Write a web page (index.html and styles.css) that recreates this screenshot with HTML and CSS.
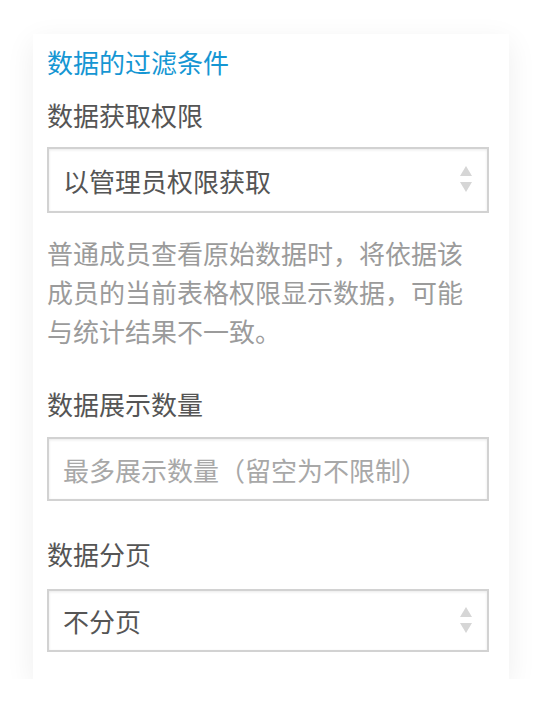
FILE: index.html
```html
<!DOCTYPE html>
<html lang="zh-CN">
<head>
<meta charset="utf-8">
<link rel="stylesheet" href="styles.css">
</head>
<body>
<div class="page">
  <div class="card">
    <div class="title">数据的过滤条件</div>
    <div class="label l1">数据获取权限</div>
    <div class="field select s1">
      <span class="value">以管理员权限获取</span>
      <svg class="arrows" width="14" height="30" viewBox="0 0 14 30"><path d="M7 1 L13 11 L1 11 Z" fill="#d6d6d6"/><path d="M1 17 L13 17 L7 27 Z" fill="#d6d6d6"/></svg>
    </div>
    <div class="help">普通成员查看原始数据时，将依据该成员的当前表格权限显示数据，可能与统计结果不一致。</div>
    <div class="label l2">数据展示数量</div>
    <div class="field input"><span class="placeholder">最多展示数量（留空为不限制）</span></div>
    <div class="label l3">数据分页</div>
    <div class="field select s3">
      <span class="value">不分页</span>
      <svg class="arrows" width="14" height="30" viewBox="0 0 14 30"><path d="M7 1 L13 11 L1 11 Z" fill="#d6d6d6"/><path d="M1 17 L13 17 L7 27 Z" fill="#d6d6d6"/></svg>
    </div>
  </div>
</div>
</body>
</html>
```
FILE: styles.css
```css
html, body {
  margin: 0;
  padding: 0;
  background: #ffffff;
}
body {
  font-family: "Noto Sans CJK SC", "Noto Sans", sans-serif;
  font-size: 26px;
}
.page {
  padding: 34px 0 0 33px;
}
.card {
  width: 476px;
  box-sizing: border-box;
  background: #fff;
  padding: 8px 20px 27px 14px;
  box-shadow: 0 8px 28px rgba(0, 0, 0, 0.07);
  display: flex;
  flex-direction: column;
}
.title {
  color: #1596d3;
  line-height: 39px;
}
.label {
  color: #555555;
  line-height: 39px;
}
.l1 { margin-top: 14px; }
.l2 { margin-top: 34px; }
.l3 { margin-top: 33px; }
.field {
  box-sizing: border-box;
  border: 2px solid #d2d2d2;
  box-shadow: inset 0 1px 3px rgba(0, 0, 0, 0.09);
  display: flex;
  align-items: center;
  justify-content: space-between;
  padding: 0 14px 0 14px;
  background: #fff;
}
.s1 { height: 66px; margin-top: 13px; }
.input { height: 64px; margin-top: 14px; }
.s3 { height: 63px; margin-top: 16px; }
.value {
  color: #555555;
}
.placeholder {
  color: #a8a8a8;
}
.arrows {
  display: block;
}
.help {
  color: #9b9b9b;
  line-height: 39px;
  margin-top: 20px;
  width: 425px;
}
```
